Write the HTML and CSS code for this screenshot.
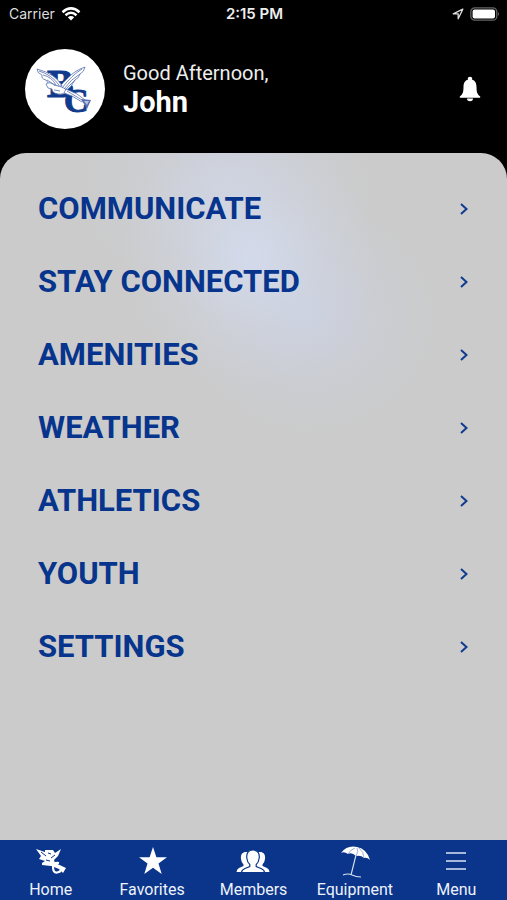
FILE: index.html
```html
<!DOCTYPE html>
<html lang="en">
<head>
<meta charset="utf-8">
<meta name="viewport" content="width=device-width, initial-scale=1">
<title>Menu</title>
<link rel="stylesheet" href="styles.css">
</head>
<body>
<div class="app">
  <div class="status">
    <div class="status-left">
      <span>Carrier</span>
      <svg width="20" height="14" viewBox="0 0 20 14" fill="none" stroke="#fff" stroke-width="2.5"><path d="M1.5 5.2Q10-2.4 18.500 5.200M4.500 8.200Q10 3.400 15.500 8.200"/><path d="M10 13.500L6.800 10.300Q10 7.600 13.200 10.300Z" fill="#fff" stroke="none"/></svg>
    </div>
    <span class="time">2:15 PM</span>
    <div class="status-right">
      <svg width="12" height="12" viewBox="0 0 12 12" fill="none" stroke="#ddd" stroke-width="1.300" stroke-linejoin="round"><path d="M10.800 1.200L1.200 5.800H6.200V10.800Z"/></svg>
      <svg width="30" height="14" viewBox="0 0 30 14"><rect x=".8" y=".8" width="26" height="12.400" rx="4" fill="none" stroke="#666" stroke-width="1.300"/><rect x="2.600" y="2.600" width="22.400" height="8.800" rx="2" fill="#fff"/><path d="M28 5Q30 7 28 9Z" fill="#666"/></svg>
    </div>
  </div>

  <header class="header">
    <svg class="avatar" viewBox="0 0 80 80" role="img" aria-label="Club crest">
      <circle cx="40" cy="40" r="40" fill="#fff"/>
      <g class="monogram"><text x="22" y="48" font-size="40">B</text><text x="39" y="63" font-size="34">C</text></g>
      <g fill="#fff" stroke="#5870ad" stroke-width=".8" stroke-linejoin="round">
        <path d="M34 39Q37 34 43 29Q49 22 60 18Q59 23 55 25Q54 29 50 31Q47 38 39 43Z"/>
        <path d="M37 37Q31 25 12 20Q12 24 17 26Q16 30 21 31Q22 35 29 37Z"/>
        <path d="M21 35Q25 32 29 36L37 38L42 41Q39 46 33 45Q27 44 27 40L23 39Z"/>
        <path d="M41 40L52 45L60 51L57 53L47 47L39 44Z"/>
        <path fill="none" d="M14 22Q27 26 34 36M18 26Q27 28 31 36M22 31L30 36M57 20Q47 26 37 39M55 25Q46 30 39 40M50 31L40 41M42 42L57 51M29 41L35 42"/>
      </g>
      <path d="M56 50L66 51L62 60Z" fill="#5870ad"/>
      <path d="M59 52L64 52L62 56Z" fill="#b8c3df"/>
    </svg>
    <div class="greeting">
      <p class="hello">Good Afternoon,</p>
      <h1 class="name">John</h1>
    </div>
    <button class="bell" type="button" aria-label="Notifications">
      <svg width="22" height="26" viewBox="0 0 22 26" fill="#fff"><circle cx="11" cy="3" r="2.300"/><path d="M11 3.500C6 3.500 4.500 7 4.500 11C4.500 16.500 3.500 18.500.8 20.400V21.700H21.200V20.400C18.500 18.500 17.500 16.500 17.500 11C17.500 7 16 3.500 11 3.500Z"/><path d="M8 22.600H14Q14 25.300 11 25.300T8 22.600Z"/></svg>
    </button>
  </header>

  <main class="panel">
    <nav class="menu" aria-label="Sections">
      <a class="row" href="#communicate"><span>COMMUNICATE</span><svg class="chev" viewBox="0 0 10 14"><path d="M2 2L7.500 7L2 12"/></svg></a>
      <a class="row" href="#connected"><span>STAY CONNECTED</span><svg class="chev" viewBox="0 0 10 14"><path d="M2 2L7.500 7L2 12"/></svg></a>
      <a class="row" href="#amenities"><span>AMENITIES</span><svg class="chev" viewBox="0 0 10 14"><path d="M2 2L7.500 7L2 12"/></svg></a>
      <a class="row" href="#weather"><span>WEATHER</span><svg class="chev" viewBox="0 0 10 14"><path d="M2 2L7.500 7L2 12"/></svg></a>
      <a class="row" href="#athletics"><span>ATHLETICS</span><svg class="chev" viewBox="0 0 10 14"><path d="M2 2L7.500 7L2 12"/></svg></a>
      <a class="row" href="#youth"><span>YOUTH</span><svg class="chev" viewBox="0 0 10 14"><path d="M2 2L7.500 7L2 12"/></svg></a>
      <a class="row" href="#settings"><span>SETTINGS</span><svg class="chev" viewBox="0 0 10 14"><path d="M2 2L7.500 7L2 12"/></svg></a>
    </nav>
  </main>

  <nav class="tabs" aria-label="Main">
    <a class="tab" href="#home">
      <svg width="36" height="32" viewBox="0 0 36 32" fill="#fff"><path d="M3 3L12 6V4H20L22 7L28 3L25 10L21 14L22 17L18 20L9 19V17L12 15L6 13L8 10Z"/><path d="M18 15L33 22L30 27L26 23L16 19Z"/><path d="M26 17Q20 16 20 21Q20 27 24 26.500Q28 26 28 23" fill="none" stroke="#fff" stroke-width="2.200"/><path d="M8 6L13 10M15 7L18 8M18 12L22 9M13 14L17 15" stroke="#0a358b" stroke-width="1" fill="none"/></svg>
      <span>Home</span>
    </a>
    <a class="tab" href="#favorites">
      <svg width="32" height="32" viewBox="0 0 32 32" fill="#fff"><path d="M17 1L20.400 11.200H31L22.500 17.600L25.700 28L17 21.700L8.300 28L11.500 17.600L3 11.200H13.600Z"/></svg>
      <span>Favorites</span>
    </a>
    <a class="tab" href="#members">
      <svg width="36" height="32" viewBox="0 0 36 32" fill="#fff"><path d="M11 6C7 6 5.500 9 6 13Q6.500 17 8.500 18.500V20L4 22Q1.500 23.500 1.500 26H34.500Q34.500 23.500 32 22L27.500 20V18.500Q29.500 17 30 13C30.500 9 29 6 25 6Z"/><path stroke="#0a358b" stroke-width="1.200" d="M18 4C13 4 11.300 7.500 11.800 12Q12.300 16.500 14.800 18.500V20.500L10 22.500Q6.500 24 6.500 26.600H29.500Q29.500 24 26 22.500L21.200 20.500V18.500Q23.700 16.500 24.200 12C24.700 7.500 23 4 18 4Z"/></svg>
      <span>Members</span>
    </a>
    <a class="tab" href="#equipment">
      <svg width="32" height="32" viewBox="0 0 32 32" fill="#fff"><path d="M2 7Q8-1 18 1Q28 3 31 14Q28 11 25 12Q22 9 17 10Q13 6 9 8Q5 5 2 7Z"/><path d="M17 9L12 29M4 29Q9 27 13 29T22 31" fill="none" stroke="#dce4f5" stroke-width="1.100"/><path d="M16 2Q11 4 9 8M18 2Q20 5 17 10M20 2Q25 6 25 12" fill="none" stroke="#7890c5" stroke-width=".7"/></svg>
      <span>Equipment</span>
    </a>
    <a class="tab" href="#menu" aria-current="page">
      <svg width="32" height="32" viewBox="0 0 32 32" fill="none" stroke="#dce4f5" stroke-width="1.500"><path d="M6 7H26M6 15H26M6 23H26"/></svg>
      <span>Menu</span>
    </a>
  </nav>
</div>
</body>
</html>
```
FILE: styles.css
```css
* { box-sizing: border-box; }

body {
  margin: 0;
  background: #000;
  font-family: Roboto, "Liberation Sans", sans-serif;
}

.app {
  min-height: 100vh;
  display: flex;
  flex-direction: column;
}

svg { display: block; flex: none; }

a { color: inherit; text-decoration: none; }

.status {
  display: grid;
  grid-template-columns: 1fr auto 1fr;
  align-items: center;
  height: 27px;
  padding: 0 7px 0 9px;
  color: #ddd;
  font-family: Inter, sans-serif;
  font-size: 14px;
}

.status-left,
.status-right {
  display: flex;
  align-items: center;
  gap: 6px;
}

.status-right { justify-content: flex-end; }

.time { font-size: 15px; font-weight: 600; color: #eee; }

.header {
  display: flex;
  align-items: center;
  gap: 18px;
  padding: 22px 26px 24px 25px;
  color: #fff;
}

.avatar { width: 80px; height: 80px; }

.monogram {
  fill: #103a8c;
  stroke: #103a8c;
  stroke-width: 1;
  font-family: "Liberation Serif", serif;
  font-weight: 700;
}

.greeting { flex: 1; }

.hello {
  margin: 0;
  color: #eee;
  font-size: 20px;
  line-height: 26px;
}

.name {
  margin: 0;
  font-size: 29px;
  line-height: 32px;
  font-weight: 700;
}

.bell {
  padding: 0;
  border: 0;
  background: none;
}

.panel {
  flex: 1;
  padding: 19px 38px;
  border-radius: 26px 26px 0 0;
  background:
    radial-gradient(ellipse 130px 130px at 250px 105px, rgba(216, 226, 250, .6), rgba(212, 220, 240, .25) 55%, rgba(208, 216, 238, 0)),
    radial-gradient(ellipse 150px 130px at 225px 30px, rgba(208, 216, 238, .5), rgba(208, 216, 238, .15) 60%, rgba(208, 216, 238, 0)),
    radial-gradient(ellipse 130px 120px at 310px 165px, rgba(203, 212, 236, .55), rgba(203, 212, 236, .2) 55%, rgba(203, 212, 236, 0)),
    #cbcbcb;
}

.row {
  display: flex;
  align-items: center;
  justify-content: space-between;
  height: 73px;
  color: #07348c;
  font-size: 31px;
  font-weight: 700;
}

.chev {
  width: 10px;
  height: 14px;
  fill: none;
  stroke: #0f3b90;
  stroke-width: 2;
}

.tabs {
  display: grid;
  grid-template-columns: repeat(5, 1fr);
  height: 60px;
  background: #0a358b;
  color: #eef2fb;
}

.tab {
  display: flex;
  flex-direction: column;
  align-items: center;
  gap: 2px;
  padding-top: 6px;
  font-size: 16px;
  line-height: 20px;
}
```
